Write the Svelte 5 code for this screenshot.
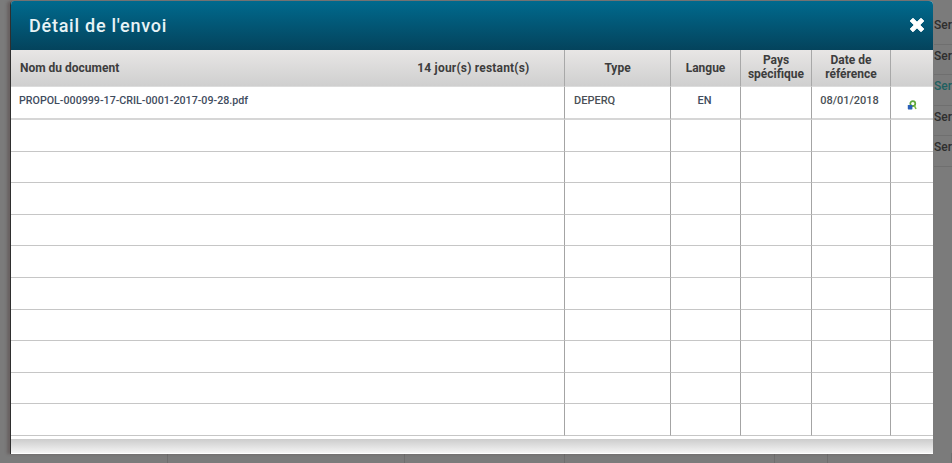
<script>
  const backRows = ["Serv", "Serv", "Serv", "Serv", "Serv"]
  const emptyRows = Array(10).fill(0)
  const backCells = [168, 237, 160, 210, 53, 124]
  const columns = [
    { label: "Type" },
    { label: "Langue" },
    { label: "Pays spécifique", wrap: true },
    { label: "Date de référence", wrap: true },
    { label: "" }
  ]
</script>

<div class="page">
  <div class="backdrop">
    {#each backRows as label, i}
      <div class="back-row" class:active={i == 2}>{label}</div>
    {/each}
  </div>

  <div class="back-bottom">
    {#each backCells as w}
      <div class="back-cell" style="width:{w}px"></div>
    {/each}
  </div>

  <div class="modal">
    <header>
      <h1>Détail de l'envoi</h1>
      <svg class="close" viewBox="0 0 16 16" width="16" height="16">
        <path d="M1.2 4 4 1.2 8 5.2 12 1.2 14.8 4 10.8 8 14.8 12 12 14.8 8 10.8 4 14.8 1.2 12 5.2 8Z" fill="#fff" stroke="#fff" stroke-linejoin="round" stroke-width="1" />
      </svg>
    </header>

    <table>
      <colgroup>
        <col class="c-name" />
        <col class="c-type" />
        <col class="c-lang" />
        <col class="c-pays" />
        <col class="c-date" />
        <col />
      </colgroup>
      <thead>
        <tr>
          <th class="name-head">
            <div class="name-inner">
              <span>Nom du document</span>
              <span class="left-days">14 jour(s) restant(s)</span>
            </div>
          </th>
          {#each columns as col}
            <th class:wrap={col.wrap}>{col.label}</th>
          {/each}
        </tr>
      </thead>
      <tbody>
        <tr class="first">
          <td class="file">PROPOL-000999-17-CRIL-0001-2017-09-28.pdf</td>
          <td class="type">DEPERQ</td>
          <td class="lang">EN</td>
          <td></td>
          <td class="date">08/01/2018</td>
          <td class="icon">
            <svg viewBox="0 0 10 10" width="10" height="10">
              <circle cx="5.8" cy="3.6" r="2.5" fill="none" stroke="#5fa83c" stroke-width="1.7" />
              <path d="M7.4 5.6 9 9" stroke="#7dbb45" stroke-width="1.6" />
              <rect x="0.8" y="5" width="4.6" height="4.4" rx="0.6" fill="#2a5fb8" />
            </svg>
          </td>
        </tr>
        {#each emptyRows as _}
          <tr>
            <td></td><td></td><td></td><td></td><td></td><td></td>
          </tr>
        {/each}
      </tbody>
    </table>

    <footer></footer>
  </div>
</div>

<style>
  :global(body) {
    margin: 0;
    background: #7a7a7a;
  }

  .page {
    position: relative;
    width: 952px;
    height: 463px;
    overflow: hidden;
    background: #7b7b7b;
    font-family: Roboto, "Liberation Sans", sans-serif;
  }

  .backdrop {
    position: absolute;
    top: 10px;
    right: 0;
    width: 18px;
    padding-top: 4px;
  }

  .back-row {
    height: 30.6px;
    line-height: 22px;
    font-size: 12px;
    font-weight: 500;
    color: #2e2e2e;
    border-bottom: 1px solid #6f6f6f;
    box-sizing: border-box;
    white-space: nowrap;
  }

  .back-row.active {
    color: #1f6060;
  }

  .back-bottom {
    position: absolute;
    left: 0;
    bottom: 0;
    height: 10px;
    display: flex;
  }

  .back-cell {
    border-right: 1px solid #6e6e6e;
    box-sizing: border-box;
  }

  .modal {
    position: absolute;
    top: 1px;
    left: 10px;
    width: 923px;
    height: 453px;
    display: flex;
    flex-direction: column;
    background: #fff;
    border-left: 1px solid #2f2f2f;
    box-sizing: border-box;
    border-radius: 4px 4px 0 0;
    overflow: hidden;
    box-shadow: -3px 0 3px rgba(70, 50, 50, 0.35);
  }

  header {
    height: 49px;
    flex: none;
    display: flex;
    align-items: center;
    justify-content: space-between;
    padding: 0 8px 0 18px;
    background: linear-gradient(#006a8e, #04435c);
  }

  h1 {
    margin: 0;
    font-size: 18px;
    font-weight: 500;
    letter-spacing: 0.75px;
    color: #e8f3f6;
  }

  .close {
    margin-bottom: 2px;
  }

  table {
    flex: none;
    width: 100%;
    border-collapse: separate;
    border-spacing: 0;
    table-layout: fixed;
    font-size: 11px;
    font-weight: 500;
  }

  .c-name { width: 553px; }
  .c-type { width: 106px; }
  .c-lang { width: 70px; }
  .c-pays { width: 71px; }
  .c-date { width: 79px; }

  th {
    height: 37px;
    box-sizing: border-box;
    padding: 0;
    font-size: 12px;
    line-height: 14px;
    font-weight: 700;
    color: #3d3d3d;
    text-align: center;
    background: linear-gradient(#e8e6e5, #cfcfcf);
    border-left: 1px solid #a8a8a8;
    border-bottom: 1px solid #dcdcdc;
  }

  th.wrap {
    padding-bottom: 2px;
  }

  th.name-head {
    border-left: none;
    text-align: left;
  }

  .name-inner {
    display: flex;
    padding-left: 9px;
  }

  .left-days {
    margin-left: 298px;
    letter-spacing: 0.2px;
  }

  td {
    height: 30.6px;
    padding: 0;
    border-left: 1px solid #a4a4a4;
    border-bottom: 1px solid #c6c6c6;
    color: #4a4f55;
    box-sizing: content-box;
  }

  td:first-child {
    border-left: none;
  }

  .first td {
    height: 33px;
    border-bottom: 2px solid #d6d6d6;
    padding-bottom: 4px;
    box-sizing: border-box;
  }

  .first td.file {
    padding-left: 8px;
    color: #3f4c5e;
    font-size: 10.7px;
  }

  .first td.type {
    padding-left: 9px;
  }

  .lang,
  .date {
    text-align: center;
  }

  .first td.lang {
    color: #3f4c5e;
    padding-right: 2px;
  }

  .first td.date {
    padding-right: 3px;
  }

  .icon svg {
    display: block;
    margin: 8px auto 0;
  }

  footer {
    flex: 1;
    margin-top: 3px;
    background: linear-gradient(#cccccc, #f4f4f4);
    border-bottom: 1px solid #fff;
  }
</style>
